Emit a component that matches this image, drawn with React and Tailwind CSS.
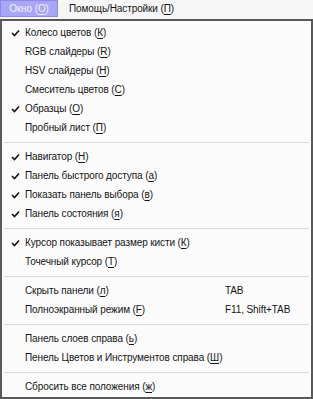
import React from "react";

const groups = [
  [
    { label: "Колесо цветов", key: "К", checked: true },
    { label: "RGB слайдеры", key: "R" },
    { label: "HSV слайдеры", key: "Н" },
    { label: "Смеситель цветов", key: "С" },
    { label: "Образцы", key: "О", checked: true },
    { label: "Пробный лист", key: "П" },
  ],
  [
    { label: "Навигатор", key: "Н", checked: true },
    { label: "Панель быстрого доступа", key: "а", checked: true },
    { label: "Показать панель выбора", key: "в", checked: true },
    { label: "Панель состояния", key: "я", checked: true },
  ],
  [
    { label: "Курсор показывает размер кисти", key: "К", checked: true },
    { label: "Точечный курсор", key: "Т" },
  ],
  [
    { label: "Скрыть панели", key: "л", shortcut: "TAB" },
    { label: "Полноэкранный режим", key: "F", shortcut: "F11, Shift+TAB" },
  ],
  [
    { label: "Панель слоев справа", key: "ь" },
    { label: "Пенель Цветов и Инструментов справа", key: "Ш" },
  ],
  [{ label: "Сбросить все положения", key: "ж" }],
];

const Check = () => (
  <svg width="9" height="8" viewBox="0 0 9 8" className="block">
    <path d="M1 4 L3.5 6.5 L8 1.5" fill="none" stroke="#111" strokeWidth="1.6" />
  </svg>
);

const MenuItem = ({ item }) => (
  <div className="flex items-center h-[19px]">
    <div className="w-[23px] flex justify-end pr-[5px]">
      {item.checked && <Check />}
    </div>
    <span className="w-[200px] whitespace-nowrap">
      {item.label} (<span className="underline underline-offset-2">{item.key}</span>)
    </span>
    {item.shortcut && <span className="whitespace-nowrap">{item.shortcut}</span>}
  </div>
);

export default function App() {
  return (
    <div
      className="w-[313px] h-[399px] bg-[#f6f6f6] text-[10px] tracking-[-0.1px] text-[#151515] overflow-hidden"
      style={{ fontFamily: '"Liberation Sans", Arial, sans-serif' }}
    >
      {/* Menu bar */}
      <div className="flex items-start h-[19px]">
        <div className="w-[58px] h-[17px] flex items-center justify-center border border-[#8b88e6] bg-[#a9a6f6] text-[#f2f2ff]">
          Окно (<span className="underline underline-offset-2">О</span>)
        </div>
        <div className="h-[17px] flex items-center pl-[11px]">
          Помощь/Настройки (<span className="underline underline-offset-2">П</span>)
        </div>
      </div>

      {/* Dropdown */}
      <div className="w-[313px] h-[380px] border-2 border-[#595959] bg-[#fbfbfb] pt-[2px]">
        {groups.map((group, gi) => (
          <div key={gi}>
            {gi > 0 && (
              <div className="h-[10px] flex items-center px-[2px]">
                <div className="h-px w-full bg-[#dadada]" />
              </div>
            )}
            {group.map((item, ii) => (
              <MenuItem key={ii} item={item} />
            ))}
          </div>
        ))}
      </div>
    </div>
  );
}
